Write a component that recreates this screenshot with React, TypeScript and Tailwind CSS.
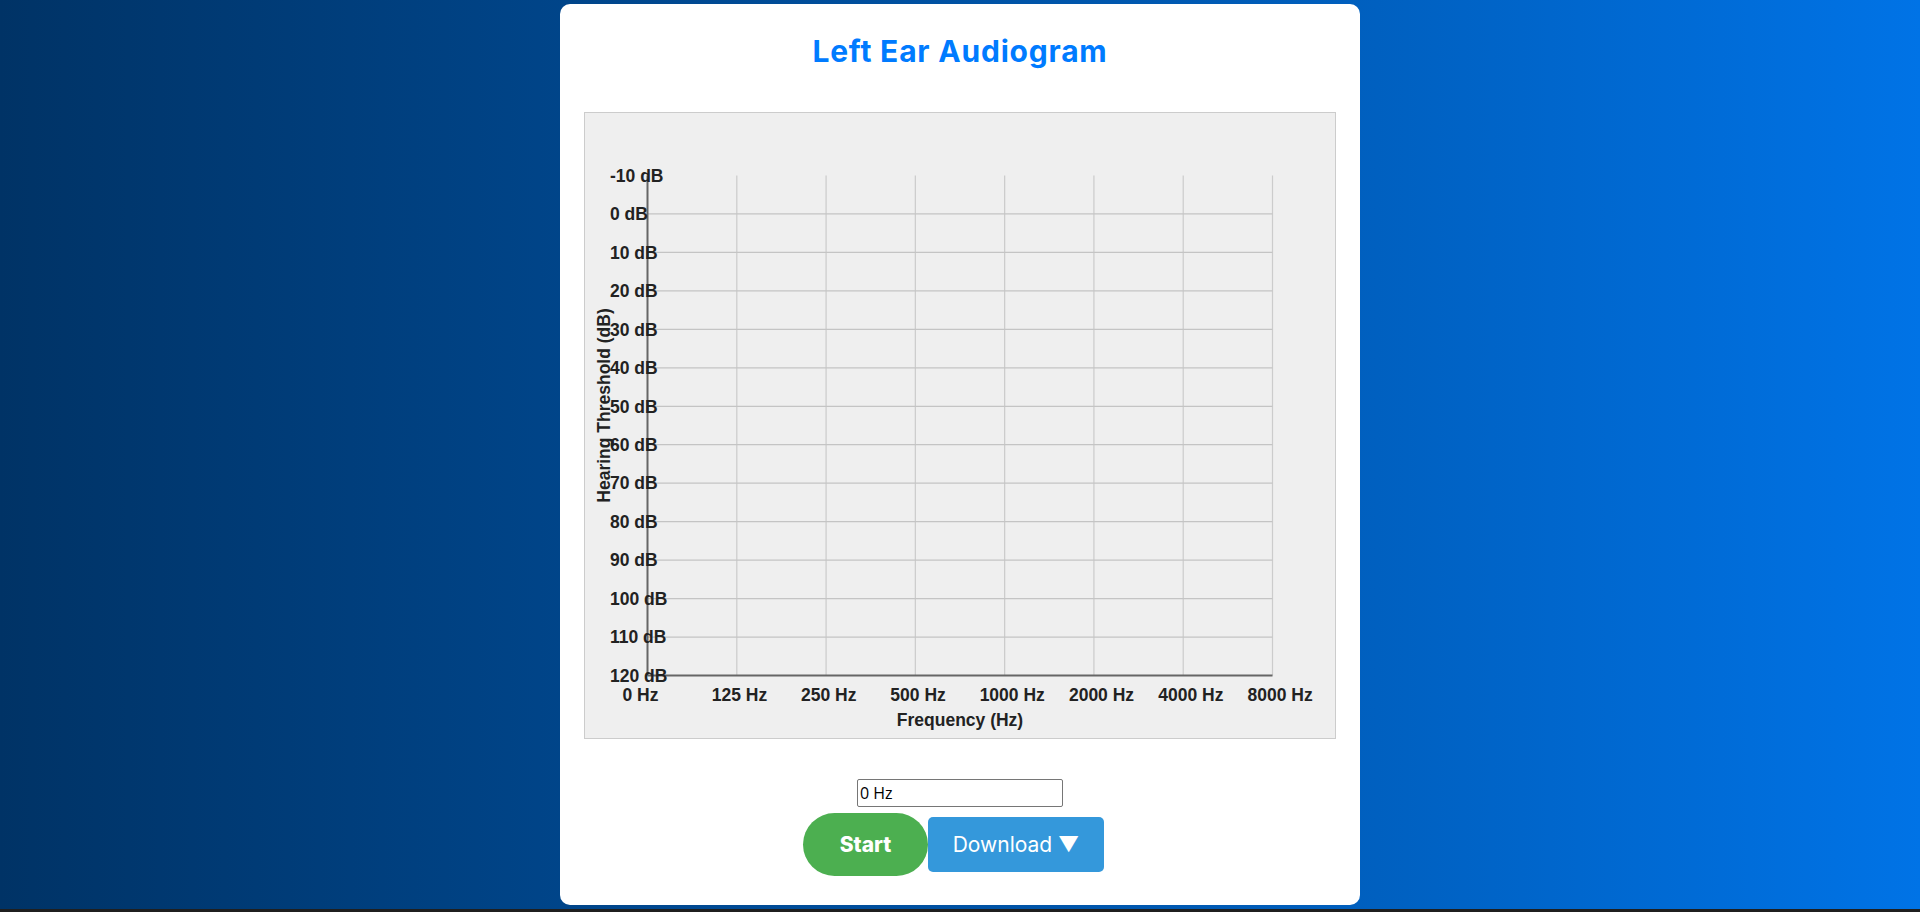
import React from "react";

const dbLevels = [-10, 0, 10, 20, 30, 40, 50, 60, 70, 80, 90, 100, 110, 120];
const freqs = ["0 Hz", "125 Hz", "250 Hz", "500 Hz", "1000 Hz", "2000 Hz", "4000 Hz", "8000 Hz"];

// plot area in canvas units (600x500, shown at 750x625)
const left = 50;
const top = 50;
const right = 550;
const bottom = 450;

function Audiogram() {
  const stepY = (bottom - top) / (dbLevels.length - 1);
  const stepX = (right - left) / (freqs.length - 1);

  return (
    <svg width={750} height={625} viewBox="0 0 600 500" className="block">
      {freqs.map((_, i) =>
        i === 0 ? null : (
          <line
            key={"v" + i}
            x1={left + i * stepX}
            y1={top}
            x2={left + i * stepX}
            y2={bottom}
            stroke="#cccccc"
            strokeWidth={1}
          />
        )
      )}
      {dbLevels.map((_, j) =>
        j === 0 || j === dbLevels.length - 1 ? null : (
          <line
            key={"h" + j}
            x1={left}
            y1={top + j * stepY}
            x2={right}
            y2={top + j * stepY}
            stroke="#c4c4c4"
            strokeWidth={1}
          />
        )
      )}
      <line x1={left} y1={top} x2={left} y2={bottom} stroke="#666666" strokeWidth={1.6} />
      <line x1={left} y1={bottom} x2={right} y2={bottom} stroke="#666666" strokeWidth={1.6} />

      <g fontFamily="'Liberation Sans', Arial, sans-serif" fontWeight="bold" fontSize={14} fill="#222222">
        {dbLevels.map((db, j) => (
          <text key={"yl" + j} x={20} y={top + j * stepY + 5}>
            {db} dB
          </text>
        ))}
        {freqs.map((f, i) => (
          <text key={"xl" + i} x={left + i * stepX - 20} y={470}>
            {f}
          </text>
        ))}
        <text x={300} y={490} textAnchor="middle">
          Frequency (Hz)
        </text>
        <text x={0} y={0} textAnchor="middle" transform="translate(20 234) rotate(-90)">
          Hearing Threshold (dB)
        </text>
      </g>
    </svg>
  );
}

export default function App() {
  return (
    <div className="h-[912px] bg-[#1f1f1f] overflow-hidden">
      <div className="h-[909px] bg-gradient-to-r from-[#003366] to-[#0073e6] pt-[4px]">
        <div className="w-[800px] mx-auto bg-white rounded-[10px] px-6 pt-[26px] pb-[29px] flex flex-col items-center">
          <h1 className="text-[30px] leading-[42px] tracking-[0.8px] font-bold text-[#007bff] font-['Inter',sans-serif]">
            Left Ear Audiogram
          </h1>
          <div className="mt-[40px] w-[752px] border border-[#cccccc] bg-[#efefef]">
            <Audiogram />
          </div>
          <input
            type="text"
            readOnly
            value="0 Hz"
            className="mt-[40px] w-[206px] h-[28px] border border-[#767676] rounded-[2px] px-[2px] text-[16px] text-black font-['Open_Sans',sans-serif]"
          />
          <div className="mt-[6px] flex items-center">
            <button className="w-[125px] h-[63px] rounded-full bg-[#4caf50] text-white text-[21px] font-extrabold font-['Inter',sans-serif]">
              Start
            </button>
            <button className="w-[176px] h-[55px] mr-[13px] rounded-[5px] bg-[#3498db] text-white text-[21px] font-['Inter',sans-serif]">
              Download ▼
            </button>
          </div>
        </div>
      </div>
    </div>
  );
}
